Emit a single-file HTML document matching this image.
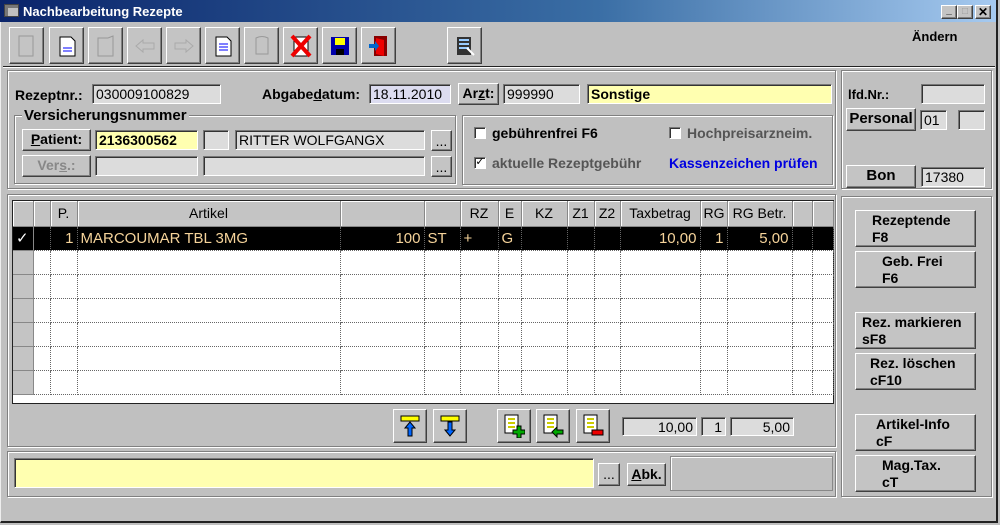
<!DOCTYPE html>
<html><head><meta charset="utf-8"><style>
*{box-sizing:border-box;margin:0;padding:0}
body{width:1000px;height:525px;background:#c0c0c0;font-family:"Liberation Sans",sans-serif;font-size:13px;color:#000;position:relative;overflow:hidden}
.a{position:absolute}
.f{position:absolute;background:#dcdcdc;border-top:1px solid #777;border-left:1px solid #777;border-bottom:1px solid #fff;border-right:1px solid #fff;box-shadow:inset 1px 1px 0 #333;padding:1px 3px;white-space:nowrap;font-size:14px;line-height:16px}
.b{position:absolute;background:#c4c4c4;border-top:1px solid #fff;border-left:1px solid #fff;border-right:1px solid #404040;border-bottom:1px solid #404040;box-shadow:inset -1px -1px 0 #808080;text-align:center;font-weight:bold;font-size:14px}
.g{position:absolute;border:1px solid #808080;box-shadow:1px 1px 0 #fff,inset 1px 1px 0 #fff}
.l{position:absolute;font-weight:bold;font-size:14px;white-space:nowrap}
.tb{position:absolute;top:27px;width:35px;height:37px;background:#c4c4c4;border-top:1px solid #fff;border-left:1px solid #fff;border-right:1px solid #404040;border-bottom:1px solid #404040;box-shadow:inset -1px -1px 0 #808080}
.tb svg{position:absolute;left:6px;top:6px}
table{border-collapse:collapse;position:absolute;left:13px;top:201px;width:820px;font-size:14px;table-layout:fixed}
td{border-right:1px dotted #666;border-bottom:1px dotted #666;height:24px;padding:0 3px;white-space:nowrap;background:#fff}
tr.h td{background:#c4c4c4;text-align:center;border-right:1px solid #888;border-bottom:1px solid #888;height:25px;box-shadow:inset 1px 1px 0 #fff}
tr.s td{background:#000;color:#f5d39a;font-size:15px}
td.i{background:#c4c4c4;border-right:1px solid #888;border-bottom:1px solid #888}
.r{text-align:right}
.rb{position:absolute;left:855px;width:121px;height:37px;text-align:left;padding:1px 0 0 16px;line-height:17px}
</style></head><body>
<div class="a" style="left:0;top:0;width:998px;height:523px;border-right:2px solid #222;border-bottom:2px solid #222;border-left:1px solid #eee"></div>
<div class="a" style="left:0;top:0;width:996px;height:22px;background:linear-gradient(90deg,#0a246a,#3a6ea5 60%,#a6caf0)"></div>
<div class="a" style="left:4px;top:4px;width:15px;height:13px;background:#c0c0c0;border:1px solid #444;box-shadow:inset 3px 3px 0 #777"></div>
<div class="a" style="left:23px;top:4px;color:#fff;font-weight:bold;font-size:13px">Nachbearbeitung Rezepte</div>
<div class="b" style="left:941px;top:5px;width:16px;height:14px;font-size:10px;line-height:10px">_</div>
<div class="b" style="left:957px;top:5px;width:16px;height:14px;font-size:10px;line-height:11px;color:#999">□</div>
<div class="b" style="left:975px;top:5px;width:16px;height:14px;font-size:12px;line-height:12px">✕</div>

<div class="tb" style="left:9px"><svg width="22" height="24"><path d="M3 2h14v20H3z" fill="none" stroke="#999"/></svg></div>
<div class="tb" style="left:49px"><svg width="22" height="24"><path d="M4 3h11l4 4v15H4z" fill="#fff" stroke="#000"/><path d="M7 14h9M7 17h9" stroke="#00f"/></svg></div>
<div class="tb" style="left:88px"><svg width="22" height="24"><path d="M3 4h10l5-2v20H3z" fill="none" stroke="#999"/></svg></div>
<div class="tb" style="left:127px"><svg width="22" height="24"><path d="M2 12l7-6v3h11v6H9v3z" fill="none" stroke="#aaa"/></svg></div>
<div class="tb" style="left:166px"><svg width="22" height="24"><path d="M20 12l-7-6v3H2v6h11v3z" fill="none" stroke="#aaa"/></svg></div>
<div class="tb" style="left:205px"><svg width="22" height="24"><path d="M4 3h11l4 4v15H4z" fill="#fff" stroke="#000"/><path d="M7 10h9M7 13h9M7 16h9" stroke="#00f"/></svg></div>
<div class="tb" style="left:244px"><svg width="22" height="24"><path d="M5 4q6-3 12 0v16H5z" fill="none" stroke="#999"/></svg></div>
<div class="tb" style="left:283px"><svg width="22" height="24"><path d="M4 3h14v19H4z" fill="#fff" stroke="#000"/><path d="M2 2l18 20M20 2L2 22" stroke="#e00" stroke-width="4"/></svg></div>
<div class="tb" style="left:322px"><svg width="22" height="24"><rect x="2" y="3" width="18" height="18" fill="#00a" /><rect x="6" y="4" width="10" height="7" fill="#ff0"/><rect x="7" y="15" width="8" height="6" fill="#000"/></svg></div>
<div class="tb" style="left:361px"><svg width="22" height="24"><rect x="6" y="2" width="13" height="20" fill="#800" /><path d="M8 4l8 2v16l-8-2z" fill="#e00"/><path d="M1 10h6v-3l4 5-4 5v-3H1z" fill="#06c"/></svg></div>
<div class="tb" style="left:447px"><svg width="22" height="24"><rect x="3" y="3" width="14" height="18" fill="#333"/><path d="M5 6h10M5 10h10M5 14h10" stroke="#9cf" stroke-width="2"/><path d="M13 14l7 7" stroke="#fff" stroke-width="2"/></svg></div>
<div class="l" style="left:912px;top:29px;font-size:13px">Ändern</div>
<div class="a" style="left:3px;top:66px;width:992px;height:2px;background:#222;border-bottom:1px solid #fff"></div>

<div class="g" style="left:7px;top:70px;width:829px;height:119px"></div>
<div class="l" style="left:15px;top:87px">Rezeptnr.:</div>
<div class="f" style="left:92px;top:84px;width:129px;height:20px">030009100829</div>
<div class="l" style="left:262px;top:86px">Abgabe<u>d</u>atum:</div>
<div class="f" style="left:369px;top:84px;width:82px;height:20px;background:#dcdcf0">18.11.2010</div>
<div class="b" style="left:458px;top:83px;width:41px;height:22px;line-height:19px">Ar<u>z</u>t:</div>
<div class="f" style="left:503px;top:84px;width:77px;height:20px">999990</div>
<div class="f" style="left:587px;top:84px;width:245px;height:20px;background:#ffffb0;font-weight:bold">Sonstige</div>

<div class="g" style="left:14px;top:115px;width:442px;height:69px"></div>
<div class="l" style="left:22px;top:107px;background:#c0c0c0;padding:0 2px;font-size:15px">Versicherungsnummer</div>
<div class="b" style="left:22px;top:129px;width:69px;height:22px;line-height:19px"><u>P</u>atient:</div>
<div class="f" style="left:95px;top:130px;width:103px;height:20px;background:#ffffb0;font-weight:bold">2136300562</div>
<div class="f" style="left:203px;top:130px;width:26px;height:20px"></div>
<div class="f" style="left:235px;top:130px;width:190px;height:20px">RITTER WOLFGANGX</div>
<div class="b" style="left:431px;top:130px;width:21px;height:21px;line-height:20px;font-weight:normal">...</div>
<div class="b" style="left:22px;top:155px;width:69px;height:22px;line-height:19px;color:#888">Ver<u>s</u>.:</div>
<div class="f" style="left:95px;top:156px;width:103px;height:20px"></div>
<div class="f" style="left:203px;top:156px;width:222px;height:20px"></div>
<div class="b" style="left:431px;top:156px;width:21px;height:21px;line-height:20px;font-weight:normal">...</div>

<div class="g" style="left:462px;top:115px;width:371px;height:70px"></div>
<div class="f" style="left:474px;top:127px;width:12px;height:12px;background:#fff;padding:0"></div>
<div class="l" style="left:492px;top:125px">gebührenfrei F6</div>
<div class="f" style="left:474px;top:157px;width:12px;height:12px;background:#fff;padding:0;font-size:11px;line-height:9px;text-align:center">✓</div>
<div class="l" style="left:492px;top:155px;color:#555">aktuelle Rezeptgebühr</div>
<div class="f" style="left:669px;top:127px;width:12px;height:12px;background:#fff;padding:0"></div>
<div class="l" style="left:687px;top:125px;color:#555">Hochpreisarzneim.</div>
<div class="l" style="left:669px;top:155px;color:#0000e0">Kassenzeichen prüfen</div>

<div class="g" style="left:841px;top:70px;width:151px;height:119px"></div>
<div class="l" style="left:848px;top:87px;font-size:13px">lfd.Nr.:</div>
<div class="f" style="left:921px;top:84px;width:64px;height:20px"></div>
<div class="b" style="left:846px;top:108px;width:70px;height:23px;line-height:20px;font-size:15px">Personal</div>
<div class="f" style="left:920px;top:110px;width:27px;height:20px">01</div>
<div class="f" style="left:958px;top:110px;width:27px;height:20px"></div>
<div class="b" style="left:846px;top:165px;width:70px;height:23px;line-height:20px;font-size:15px">Bon</div>
<div class="f" style="left:921px;top:167px;width:64px;height:20px">17380</div>

<div class="g" style="left:7px;top:194px;width:829px;height:253px"></div>
<div class="a" style="left:12px;top:200px;width:822px;height:204px;background:#fff;border:1px solid #222"></div>
<table>
<colgroup><col style="width:20px"><col style="width:17px"><col style="width:27px"><col style="width:263px"><col style="width:84px"><col style="width:36px"><col style="width:38px"><col style="width:23px"><col style="width:46px"><col style="width:27px"><col style="width:26px"><col style="width:80px"><col style="width:27px"><col style="width:65px"><col style="width:20px"><col style="width:21px"></colgroup>
<tr class="h"><td></td><td></td><td>P.</td><td>Artikel</td><td></td><td></td><td>RZ</td><td>E</td><td>KZ</td><td>Z1</td><td>Z2</td><td>Taxbetrag</td><td>RG</td><td>RG Betr.</td><td></td><td></td></tr>
<tr class="s"><td class="i" style="background:#000;color:#fff">✓</td><td></td><td class="r">1</td><td>MARCOUMAR TBL 3MG</td><td class="r">100</td><td>ST</td><td>+</td><td>G</td><td></td><td></td><td></td><td class="r">10,00</td><td class="r">1</td><td class="r">5,00</td><td></td><td></td></tr>
<tr><td class="i"></td><td></td><td></td><td></td><td></td><td></td><td></td><td></td><td></td><td></td><td></td><td></td><td></td><td></td><td></td><td></td></tr>
<tr><td class="i"></td><td></td><td></td><td></td><td></td><td></td><td></td><td></td><td></td><td></td><td></td><td></td><td></td><td></td><td></td><td></td></tr>
<tr><td class="i"></td><td></td><td></td><td></td><td></td><td></td><td></td><td></td><td></td><td></td><td></td><td></td><td></td><td></td><td></td><td></td></tr>
<tr><td class="i"></td><td></td><td></td><td></td><td></td><td></td><td></td><td></td><td></td><td></td><td></td><td></td><td></td><td></td><td></td><td></td></tr>
<tr><td class="i"></td><td></td><td></td><td></td><td></td><td></td><td></td><td></td><td></td><td></td><td></td><td></td><td></td><td></td><td></td><td></td></tr>
<tr><td class="i" style="height:10px"></td><td></td><td></td><td></td><td></td><td></td><td></td><td></td><td></td><td></td><td></td><td></td><td></td><td></td><td></td><td></td></tr>
</table>
<div class="tb" style="left:393px;top:409px;width:34px;height:34px"><svg width="22" height="24" style="left:5px;top:4px"><rect x="2" y="2" width="18" height="5" fill="#ff0" stroke="#000"/><path d="M11 8l-5 6h3v8h4v-8h3z" fill="#06f" stroke="#000"/></svg></div>
<div class="tb" style="left:433px;top:409px;width:34px;height:34px"><svg width="22" height="24" style="left:5px;top:4px"><rect x="2" y="2" width="18" height="5" fill="#ff0" stroke="#000"/><path d="M11 22l-5-6h3V8h4v8h3z" fill="#06f" stroke="#000"/></svg></div>
<div class="tb" style="left:497px;top:409px;width:34px;height:34px"><svg width="22" height="24" style="left:5px;top:4px"><rect x="2" y="1" width="13" height="18" fill="#fff" stroke="#000"/><path d="M5 5h7M5 9h7M5 13h7" stroke="#cc0" stroke-width="2"/><path d="M14 12h4v4h4v4h-4v4h-4v-4h-4v-4h4z" fill="#0a0" stroke="#000"/></svg></div>
<div class="tb" style="left:536px;top:409px;width:34px;height:34px"><svg width="22" height="24" style="left:5px;top:4px"><rect x="2" y="1" width="13" height="18" fill="#fff" stroke="#000"/><path d="M5 5h7M5 9h7M5 13h7" stroke="#cc0" stroke-width="2"/><path d="M10 18l5-5v3h6v4h-6v3z" fill="#0a0" stroke="#000"/></svg></div>
<div class="tb" style="left:576px;top:409px;width:34px;height:34px"><svg width="22" height="24" style="left:5px;top:4px"><rect x="2" y="1" width="13" height="18" fill="#fff" stroke="#000"/><path d="M5 5h7M5 9h7M5 13h7" stroke="#cc0" stroke-width="2"/><rect x="10" y="16" width="11" height="5" fill="#e00" stroke="#000"/></svg></div>
<div class="f" style="left:622px;top:417px;width:75px;height:19px;text-align:right">10,00</div>
<div class="f" style="left:701px;top:417px;width:25px;height:19px;text-align:right">1</div>
<div class="f" style="left:730px;top:417px;width:64px;height:19px;text-align:right">5,00</div>

<div class="g" style="left:7px;top:451px;width:829px;height:46px"></div>
<div class="f" style="left:14px;top:458px;width:580px;height:30px;background:#ffffb0"></div>
<div class="b" style="left:598px;top:463px;width:22px;height:23px;line-height:20px;font-weight:normal">...</div>
<div class="b" style="left:627px;top:463px;width:39px;height:23px;line-height:20px"><u>A</u>bk.</div>
<div class="a" style="left:670px;top:456px;width:163px;height:35px;border:1px solid #888;box-shadow:inset 1px 1px 0 #fff"></div>

<div class="g" style="left:841px;top:196px;width:151px;height:301px"></div>
<div class="b rb" style="top:210px;padding-left:16px">Rezeptende<br>F8</div>
<div class="b rb" style="top:251px;padding-left:26px">Geb. Frei<br>F6</div>
<div class="b rb" style="top:312px;padding-left:6px">Rez. markieren<br>sF8</div>
<div class="b rb" style="top:353px;padding-left:14px">Rez. löschen<br>cF10</div>
<div class="b rb" style="top:414px;padding-left:20px">Artikel-Info<br>cF</div>
<div class="b rb" style="top:455px;padding-left:26px">Mag.Tax.<br>cT</div>
</body></html>
